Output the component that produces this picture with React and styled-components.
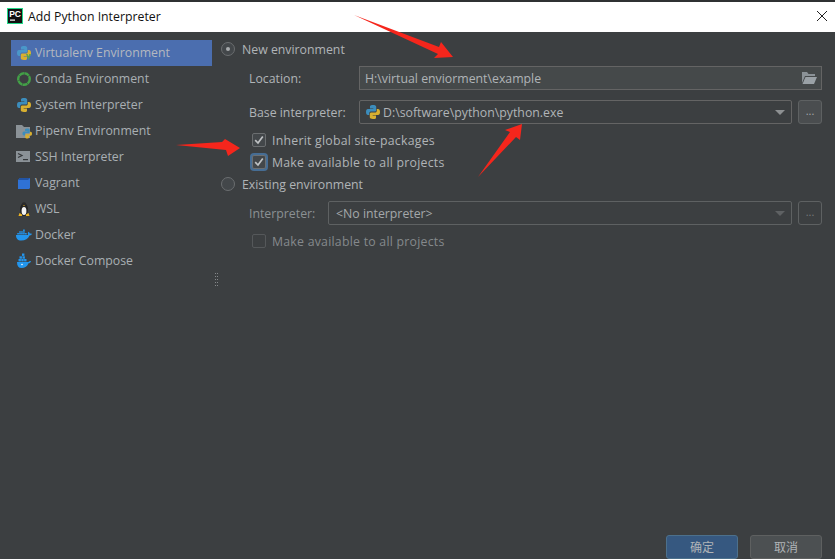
import React from "react";
import styled, { createGlobalStyle } from "styled-components";
import { FaDocker } from "react-icons/fa";

const Global = createGlobalStyle`
  html, body { margin: 0; padding: 0; background: #3c3f41; }
  * { box-sizing: border-box; }
`;
const FONT = `"Open Sans", "Noto Sans", "Noto Sans CJK SC", sans-serif`;

const Dialog = styled.div`
  position: relative; width: 835px; height: 559px; overflow: hidden;
  display: flex; flex-direction: column; background: #3c3f41;
  font-family: ${FONT}; font-size: 12.3px; color: #b0b4b7;
`;
const TopStrip = styled.div`height: 2px; background: #2f3133; flex: none;`;
const TitleBar = styled.header`
  height: 30px; flex: none; background: #fff; color: #111;
  display: flex; align-items: center; padding: 0 6px 2px 7px; gap: 5px;
`;
const TitleText = styled.span`flex: 1; font-size: 12.3px;`;
const Close = styled.button`
  width: 14px; height: 14px; padding: 0; border: 0; background: none;
  display: flex; align-items: center; justify-content: center;
`;
const Main = styled.main`flex: 1; display: flex; min-height: 0;`;
const Sidebar = styled.nav`
  width: 212px; flex: none; padding: 8px 0 0 11px; display: flex; flex-direction: column;
`;
const Item = styled.div`
  height: 26px; display: flex; align-items: center; gap: 3px; padding: 0 0 1px 5px;
  color: ${p => (p.$selected ? "#b4b8bf" : "#a9afb3")};
  background: ${p => (p.$selected ? "#4b6eaf" : "transparent")};
`;
const IconSlot = styled.span`
  width: 16px; height: 16px; flex: none; display: flex; align-items: center; justify-content: center;
`;
const GripColumn = styled.div`
  width: 9px; flex: none; display: flex; justify-content: center; padding-top: 241px;
`;
const Grip = styled.div`
  width: 3px; height: 14px;
  background-image:
    linear-gradient(to bottom, transparent 1px, #3c3f41 1px),
    linear-gradient(to right, #85888a 1px, #3c3f41 1px);
  background-size: 100% 3px, 2px 100%;
`;
const Content = styled.section`
  flex: 1; padding: 6px 13px 0 0; display: flex; flex-direction: column;
`;
const RadioRow = styled.label`
  display: flex; align-items: center; height: 22px; gap: 7px;
  margin-top: ${p => p.$mt || 0}px;
`;
const Radio = styled.span`
  width: 14px; height: 14px; border-radius: 50%; flex: none;
  border: 1px solid #6b6e70; background: #43474a;
  display: flex; align-items: center; justify-content: center;
  &::after {
    content: ""; width: 4px; height: 4px; border-radius: 50%;
    background: ${p => (p.$on ? "#a9acae" : "transparent")};
  }
`;
const Field = styled.div`
  display: flex; align-items: center; gap: 6px; height: 24px; padding-left: 28px;
  margin-top: ${p => p.$mt || 0}px;
`;
const FieldLabel = styled.span`
  width: ${p => p.$w}px; flex: none; color: ${p => (p.$dim ? "#8b9093" : "#b0b4b7")};
`;
const Input = styled.div`
  flex: 1; height: 24px; display: flex; align-items: center; padding: 0 4px 0 5px;
  background: #45494a; border: 1px solid #646464; color: #b0b4b7;
`;
const InputText = styled.span`flex: 1;`;
const Select = styled.div`
  flex: 1; height: 24px; display: flex; align-items: center; gap: 2px;
  padding: 0 6px 0 ${p => (p.$dim ? 7 : 5)}px;
  border: 1px solid ${p => (p.$dim ? "#5e6162" : "#646464")}; border-radius: 2px;
  color: ${p => (p.$dim ? "#a4a8aa" : "#b0b4b7")};
`;
const Caret = styled.span`
  width: 0; height: 0; border-left: 5px solid transparent; border-right: 5px solid transparent;
  border-top: 5px solid ${p => (p.$dim ? "#5e6163" : "#8d9092")};
`;
const Dots = styled.button`
  width: 24px; height: 24px; flex: none; padding: 0 0 3px; border-radius: 3px;
  font: 11px ${FONT}; line-height: 16px;
  border: 1px solid #5e6162;
  background: ${p => (p.$dim ? "transparent" : "#4a4d4f")};
  color: ${p => (p.$dim ? "#77797b" : "#a4a7a9")};
`;
const CheckRow = styled.label`
  display: flex; align-items: center; gap: 6px; height: 22px; padding-left: 31px;
  margin-top: ${p => p.$mt || 0}px; letter-spacing: 0.24px;
  color: ${p => (p.$dim ? "#85898c" : "#b0b4b7")};
`;
const Box = styled.span`
  width: 14px; height: 14px; flex: none; border-radius: 2px;
  display: flex; align-items: center; justify-content: center;
  border: 1px solid ${p => (p.$focus ? "#6b6f72" : p.$dim ? "#55585a" : "#6b6e70")};
  background: ${p => (p.$dim ? "transparent" : "#43474a")};
  box-shadow: ${p => (p.$focus ? "0 0 0 2px #466d94" : "none")};
`;
const Footer = styled.footer`
  height: 24px; flex: none; display: flex; justify-content: flex-end; gap: 12px; padding-right: 13px;
`;
const Btn = styled.button`
  width: 72px; height: 24px; padding: 0; border-radius: 3px; font: 12px ${FONT};
  color: #b0b4b7;
  background: ${p => (p.$primary ? "#365880" : "#4c5052")};
  border: 1px solid ${p => (p.$primary ? "#4c708c" : "#5e6060")};
`;
const ArrowLayer = styled.svg`
  position: absolute; left: 0; top: 0; width: 835px; height: 559px; pointer-events: none;
`;

const PyLogo = () => (
  <svg width="16" height="16" viewBox="0 0 16 16">
    <path d="M8 1C4.800 1 5 2.300 5 2.600V4.500h3.300V5H3C1.600 5 1 6.200 1 8s.7 3 2 3h1.200V9.300C4.200 8 5.200 7.500 6.300 7.500h3.300c1 0 1.600-.7 1.600-1.600V2.700C11.200 1.600 10 1 8 1z" fill="#3c8dbc" />
    <path d="M8 15c3.200 0 3-1.300 3-1.600v-1.900H7.700V11H13c1.400 0 2-1.200 2-3s-.7-3-2-3h-1.200v1.700c0 1.300-1 1.800-2.100 1.800H6.400c-1 0-1.600.7-1.600 1.600v3.200C4.800 14.400 6 15 8 15z" fill="#d8b030" />
  </svg>
);
const Icons = {
  venv: (
    <svg width="16" height="16" viewBox="0 0 16 16">
      <path d="M8 1C4.800 1 5 2.300 5 2.600V4.500h3.300V5H3C1.600 5 1 6.200 1 8s.7 3 2 3h1.200V9.300C4.200 8 5.200 7.500 6.300 7.500h3.300c1 0 1.600-.7 1.600-1.600V2.700C11.200 1.600 10 1 8 1z" fill="#4a97c9" />
      <path d="M8 15c3.200 0 3-1.300 3-1.600v-1.900H7.700V11H13c1.400 0 2-1.200 2-3s-.7-3-2-3h-1.200v1.700c0 1.300-1 1.800-2.100 1.800H6.400c-1 0-1.600.7-1.600 1.600v3.200C4.800 14.400 6 15 8 15z" fill="#d8b030" />
      <path d="M10 9l2.500 6L15 9h-1.700l-.8 2.500L11.700 9z" fill="#5aa64a" />
    </svg>
  ),
  conda: (
    <svg width="16" height="16" viewBox="0 0 16 16">
      <circle cx="8" cy="8" r="5.800" fill="none" stroke="#43a047" strokeWidth="2.400" strokeDasharray="5 .4" />
    </svg>
  ),
  python: <PyLogo />,
  pipenv: (
    <svg width="16" height="16" viewBox="0 0 16 16">
      <path d="M0 2h6l2 2h6v11H0z" fill="#8b9297" />
      <path d="M11 5.500c-2 0-2 .9-2 1.100V8h2.500v.4H8c-1 0-1.500.8-1.500 2s.5 2 1.500 2h1v-1.200c0-.9.600-1.200 1.400-1.200h2.200c.7 0 1.100-.5 1.100-1.100V6.600C13.700 5.900 12.500 5.500 11 5.500z" fill="#3c8dbc" />
      <path d="M11 15.600c2 0 2-.9 2-1.100V13h-2.300v-.3H14.600c1 0 1.400-.8 1.400-2s-.4-2-1.300-2h-.7V10c0 .9-.7 1.200-1.400 1.200H10.400c-.7 0-1.100.5-1.100 1.100v2.200C9.300 15.200 10 15.600 11 15.600z" fill="#d8b030" />
    </svg>
  ),
  ssh: (
    <svg width="16" height="16" viewBox="0 0 16 16">
      <rect x="0" y="2" width="14" height="11" fill="#8b9297" />
      <path d="M2 4.500l4 2-4 2" fill="none" stroke="#34373a" strokeWidth="1.200" />
      <rect x="7" y="10" width="5" height="1.200" fill="#34373a" />
    </svg>
  ),
  vagrant: (
    <svg width="16" height="16" viewBox="0 0 16 16">
      <path d="M2 5l2-2h10v10l-1 1H2z" fill="#2f72d6" />
      <path d="M2 5l2-2h10l-2 2z" fill="#2254a4" />
    </svg>
  ),
  wsl: (
    <svg width="16" height="16" viewBox="0 0 16 16">
      <ellipse cx="8" cy="8.500" rx="4" ry="6.500" fill="#232323" />
      <ellipse cx="8" cy="10" rx="2.400" ry="4" fill="#f2f2f2" />
      <circle cx="8" cy="3.500" r="2.200" fill="#2a2a2a" />
      <path d="M7 4.200h2L8 5.300z" fill="#eeb422" />
      <path d="M2.500 15l1-3 2.500 1.500L6 15zM13.500 15l-1-3-2.500 1.500L10 15z" fill="#eeb422" />
    </svg>
  ),
  docker: <FaDocker size={16} color="#2396ed" />,
  compose: (
    <svg width="16" height="16" viewBox="0 0 16 16">
      <path d="M1 9h11.500c.6-1 1.700-1.200 2.500-.8-.5 1.400-1.500 2-2.500 2C11.500 13 9 15 5.500 15 2.500 15 1 13 1 9z" fill="#2396ed" />
      <g fill="#2396ed">
        <rect x="6" y="0.500" width="2.400" height="2.400" />
        <rect x="3.500" y="3.300" width="2.400" height="2.400" />
        <rect x="6.500" y="3.300" width="2.400" height="2.400" />
        <rect x="2.500" y="6" width="2.400" height="2.400" />
        <rect x="5.300" y="6" width="2.400" height="2.400" />
        <rect x="8.100" y="6" width="2.400" height="2.400" />
      </g>
      <circle cx="6" cy="11.500" r=".8" fill="#fff" />
    </svg>
  ),
};

const items = [
  ["venv", "Virtualenv Environment"],
  ["conda", "Conda Environment"],
  ["python", "System Interpreter"],
  ["pipenv", "Pipenv Environment"],
  ["ssh", "SSH Interpreter"],
  ["vagrant", "Vagrant"],
  ["wsl", "WSL"],
  ["docker", "Docker"],
  ["compose", "Docker Compose"],
];

const Tick = () => (
  <svg width="10" height="10" viewBox="0 0 10 10">
    <path d="M1.200 5.200L4 8l4.800-6.500" fill="none" stroke="#bfc2c4" strokeWidth="1.700" />
  </svg>
);

export default function App() {
  return (
    <Dialog>
      <Global />
      <TopStrip />
      <TitleBar>
        <svg width="16" height="16" viewBox="0 0 16 16">
          <rect x=".5" y=".5" width="15" height="15" fill="#111" stroke="#21d789" />
          <rect x="3" y="11.500" width="5" height="1.200" fill="#fff" />
          <text x="2.200" y="9.200" fontSize="8.500" fontWeight="700" fill="#fff" fontFamily="Liberation Sans, sans-serif">PC</text>
        </svg>
        <TitleText>Add Python Interpreter</TitleText>
        <Close aria-label="Close">
          <svg width="12" height="12" viewBox="0 0 12 12">
            <path d="M1 1l10 10M11 1L1 11" stroke="#222" strokeWidth="1" />
          </svg>
        </Close>
      </TitleBar>
      <Main>
        <Sidebar>
          {items.map(([k, label], i) => (
            <Item key={k} $selected={i === 0}>
              <IconSlot>{Icons[k]}</IconSlot>
              {label}
            </Item>
          ))}
        </Sidebar>
        <GripColumn><Grip /></GripColumn>
        <Content>
          <RadioRow><Radio $on />New environment</RadioRow>
          <Field $mt={6}>
            <FieldLabel $w={104}>Location:</FieldLabel>
            <Input>
              <InputText>H:\virtual enviorment\example</InputText>
              <svg width="16" height="14" viewBox="0 0 16 14">
                <path d="M1 1h5l1.500 2H14v2H4L1 12z" fill="#8b9297" />
                <path d="M4.500 6H16l-3 7H1.500z" fill="#9aa1a6" />
              </svg>
            </Input>
          </Field>
          <Field $mt={10}>
            <FieldLabel $w={104}>Base interpreter:</FieldLabel>
            <Select>
              <PyLogo />
              <InputText>D:\software\python\python.exe</InputText>
              <Caret />
            </Select>
            <Dots>...</Dots>
          </Field>
          <CheckRow $mt={5}><Box><Tick /></Box>Inherit global site-packages</CheckRow>
          <CheckRow><Box $focus><Tick /></Box>Make available to all projects</CheckRow>
          <RadioRow><Radio />Existing environment</RadioRow>
          <Field $mt={6}>
            <FieldLabel $w={73} $dim>Interpreter:</FieldLabel>
            <Select $dim>
              <InputText>&lt;No interpreter&gt;</InputText>
              <Caret $dim />
            </Select>
            <Dots $dim>...</Dots>
          </Field>
          <CheckRow $mt={5} $dim><Box $dim />Make available to all projects</CheckRow>
        </Content>
      </Main>
      <Footer>
        <Btn $primary>确定</Btn>
        <Btn>取消</Btn>
      </Footer>
      <ArrowLayer viewBox="0 0 835 559">
        <path d="M354 15L439 47L441 42L453 57L434 58L438 54Z" fill="#f5261c" />
        <path d="M176 145L222 142L225 139L240 148L228 156L226 150Z" fill="#f5261c" />
        <path d="M478 177L510 132L505 130L522 124L520 140L516 137Z" fill="#f5261c" />
      </ArrowLayer>
    </Dialog>
  );
}
